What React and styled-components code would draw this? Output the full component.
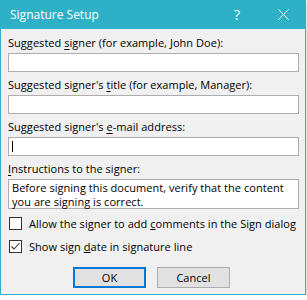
import React from 'react'
import styled, { createGlobalStyle } from 'styled-components'

const Global = createGlobalStyle`
  html, body {
    margin: 0;
    padding: 0;
    background: #ffffff;
  }
  body {
    font-family: 'Open Sans', 'Noto Sans', sans-serif;
  }
`

const Window = styled.div`
  width: 306px;
  height: 295px;
  box-sizing: border-box;
  border: 1px solid #2eb1c7;
  border-top: none;
  background: #f0f0f0;
  box-shadow: 0 2px 4px rgba(0, 0, 0, 0.25);
  display: flex;
  flex-direction: column;
`

const TitleBar = styled.div`
  height: 29px;
  flex-shrink: 0;
  margin: 0 -1px;
  background: #2eb1c7;
  color: #ffffff;
  display: flex;
  align-items: center;
  padding-left: 10px;
  font-size: 12px;
`

const Caption = styled.span`
  flex: 1;
`

const TitleButton = styled.span`
  width: 46px;
  text-align: center;
  font-size: 14px;
  display: flex;
  justify-content: center;
`

const Body = styled.div`
  padding: 6px 6px 0 7px;
  display: flex;
  flex-direction: column;
  font-size: 11px;
  letter-spacing: 0.04px;
  color: #000000;
`

const Field = styled.div`
  display: flex;
  flex-direction: column;
  margin-bottom: ${p => (p.last ? 3 : 5)}px;
`

const Label = styled.label`
  line-height: 16px;
  margin-bottom: 2px;
  u {
    text-decoration: underline;
    text-underline-offset: 2px;
  }
`

const Input = styled.div`
  height: ${p => (p.tall ? 30 : 19)}px;
  box-sizing: border-box;
  background: #ffffff;
  border: 1px solid #adadad;
  padding: 1px 3px;
  line-height: 14px;
  position: relative;
`

const Caret = styled.span`
  position: absolute;
  left: 3px;
  top: 3px;
  width: 1px;
  height: 11px;
  background: #000000;
`

const CheckRow = styled.div`
  display: flex;
  align-items: center;
  gap: 7px;
  height: 23px;
  padding-left: 1px;
  white-space: nowrap;
`

const Box = styled.span`
  width: 13px;
  height: 13px;
  flex-shrink: 0;
  box-sizing: border-box;
  border: 1px solid #333333;
  background: #ffffff;
  display: flex;
  align-items: center;
  justify-content: center;
`

const Buttons = styled.div`
  display: flex;
  justify-content: center;
  gap: 11px;
  margin-top: 9px;
  padding-right: 4px;
`

const Button = styled.div`
  width: 73px;
  height: 21px;
  box-sizing: border-box;
  background: #e1e1e1;
  border: ${p => (p.primary ? '2px solid #0078d7' : '1px solid #adadad')};
  display: flex;
  align-items: center;
  justify-content: center;
  font-size: 11px;
`

const Check = () => (
  <svg width="11" height="11" viewBox="0 0 11 11">
    <path d="M1.5 5.5 L4 8 L9.5 2" fill="none" stroke="#333" strokeWidth="1.1" />
  </svg>
)

const Close = () => (
  <svg width="11" height="11" viewBox="0 0 11 11">
    <path d="M0.5 0.5 L10.5 10.5 M10.5 0.5 L0.5 10.5" stroke="#fff" strokeWidth="1" />
  </svg>
)

export default function App() {
  return (
    <>
      <Global />
      <Window>
        <TitleBar>
          <Caption>Signature Setup</Caption>
          <TitleButton>?</TitleButton>
          <TitleButton>
            <Close />
          </TitleButton>
        </TitleBar>
        <Body>
          <Field>
            <Label>
              Suggested <u>s</u>igner (for example, John Doe):
            </Label>
            <Input />
          </Field>
          <Field>
            <Label>
              Suggested signer's <u>t</u>itle (for example, Manager):
            </Label>
            <Input />
          </Field>
          <Field>
            <Label>
              Suggested signer's <u>e</u>-mail address:
            </Label>
            <Input>
              <Caret />
            </Input>
          </Field>
          <Field last>
            <Label>
              <u>I</u>nstructions to the signer:
            </Label>
            <Input tall>
              Before signing this document, verify that the content you are
              signing is correct.
            </Input>
          </Field>
          <CheckRow>
            <Box />
            <span>
              Allow the signer to add <u>c</u>omments in the Sign dialog
            </span>
          </CheckRow>
          <CheckRow>
            <Box>
              <Check />
            </Box>
            <span>
              Show sign <u>d</u>ate in signature line
            </span>
          </CheckRow>
          <Buttons>
            <Button primary>OK</Button>
            <Button>Cancel</Button>
          </Buttons>
        </Body>
      </Window>
    </>
  )
}
